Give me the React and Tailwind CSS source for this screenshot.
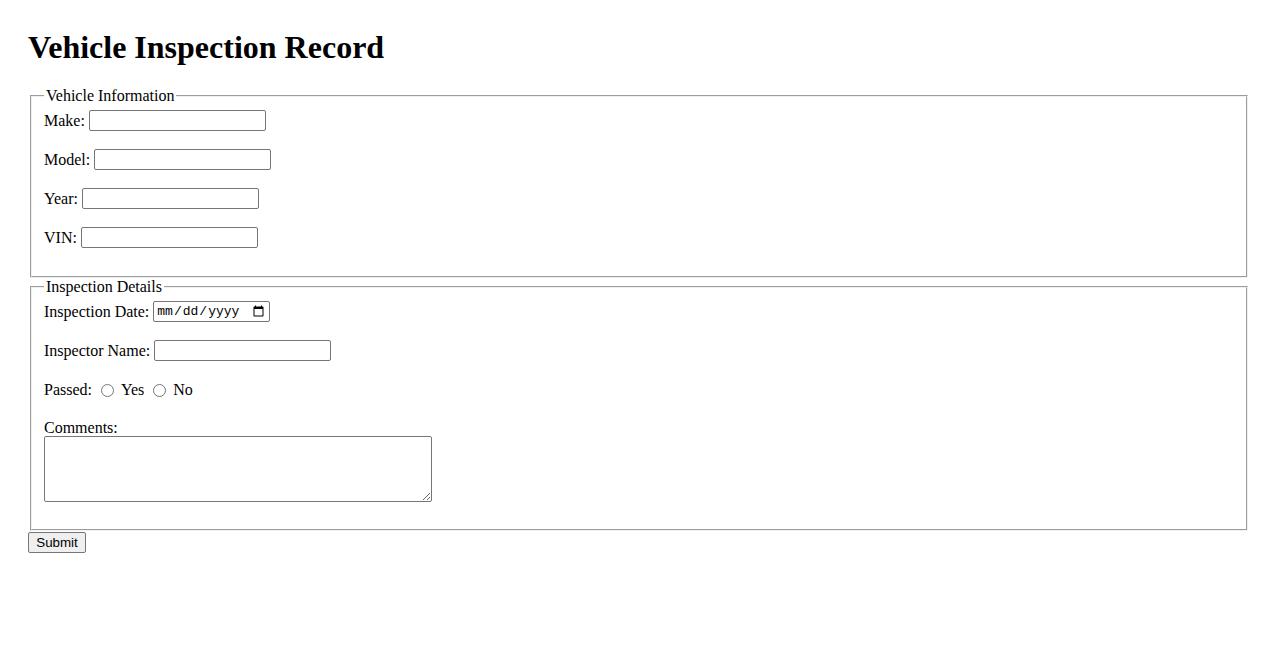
export default function App() {
  const inputCls =
    "ml-[4px] w-[177px] h-[21px] border border-[#767676] rounded-[2px] bg-white px-[2px] font-['Liberation_Sans',Arial,sans-serif] text-[13.33px]"
  const fieldsetCls =
    "mx-[2px] border-2 [border-style:groove] border-[#f0f0f0] px-[12px] pt-[5px] pb-[10px]"

  return (
    <div className="min-h-[650px] bg-white px-[28px] pt-[29px] font-['Liberation_Serif','Times_New_Roman',serif] text-[16px] leading-[18px] text-black">
      <h1 className="m-0 mb-[21px] text-[32px] font-bold leading-[37px]">Vehicle Inspection Record</h1>

      <form onSubmit={(e) => e.preventDefault()}>
        <fieldset className={fieldsetCls}>
          <legend className="px-[2px] leading-[18px]">Vehicle Information</legend>
          <div className="flex h-[21px] items-center mb-[18px]">
            <label htmlFor="make">Make:</label>
            <input id="make" type="text" className={inputCls} />
          </div>
          <div className="flex h-[21px] items-center mb-[18px]">
            <label htmlFor="model">Model:</label>
            <input id="model" type="text" className={inputCls} />
          </div>
          <div className="flex h-[21px] items-center mb-[18px]">
            <label htmlFor="year">Year:</label>
            <input id="year" type="text" className={inputCls} />
          </div>
          <div className="flex h-[21px] items-center mb-[18px]">
            <label htmlFor="vin">VIN:</label>
            <input id="vin" type="text" className={inputCls} />
          </div>
        </fieldset>

        <fieldset className={fieldsetCls}>
          <legend className="px-[2px] leading-[18px]">Inspection Details</legend>
          <div className="flex h-[21px] items-center mb-[18px]">
            <label htmlFor="date">Inspection Date:</label>
            <input
              id="date"
              type="date"
              className="ml-[4px] w-[117px] h-[21px] border border-[#767676] rounded-[2px] bg-white px-[2px] font-['Liberation_Mono','Courier_New',monospace] text-[13px]"
            />
          </div>
          <div className="flex h-[21px] items-center mb-[18px]">
            <label htmlFor="inspector">Inspector Name:</label>
            <input id="inspector" type="text" className={inputCls} />
          </div>
          <div className="flex h-[21px] items-center mb-[18px]">
            <span>Passed:</span>
            <input id="yes" type="radio" name="passed" className="ml-[9px] mr-[3px] mt-[1px] h-[13px] w-[13px]" />
            <label htmlFor="yes" className="ml-[4px]">Yes</label>
            <input id="no" type="radio" name="passed" className="ml-[9px] mr-[3px] mt-[1px] h-[13px] w-[13px]" />
            <label htmlFor="no" className="ml-[4px]">No</label>
          </div>
          <label htmlFor="comments" className="block h-[18px] pt-[1px]">Comments:</label>
          <textarea
            id="comments"
            className="block w-[388px] h-[66px] border border-[#767676] rounded-[2px] bg-white p-[2px] mb-[17px] font-['Liberation_Mono',monospace] text-[13px]"
          />
        </fieldset>

        <button
          type="submit"
          className="mt-[1px] h-[21px] w-[58px] border border-[#767676] rounded-[2px] bg-[#efefef] px-[6px] font-['Liberation_Sans',Arial,sans-serif] text-[13.33px] leading-[15px]"
        >
          Submit
        </button>
      </form>
    </div>
  )
}
